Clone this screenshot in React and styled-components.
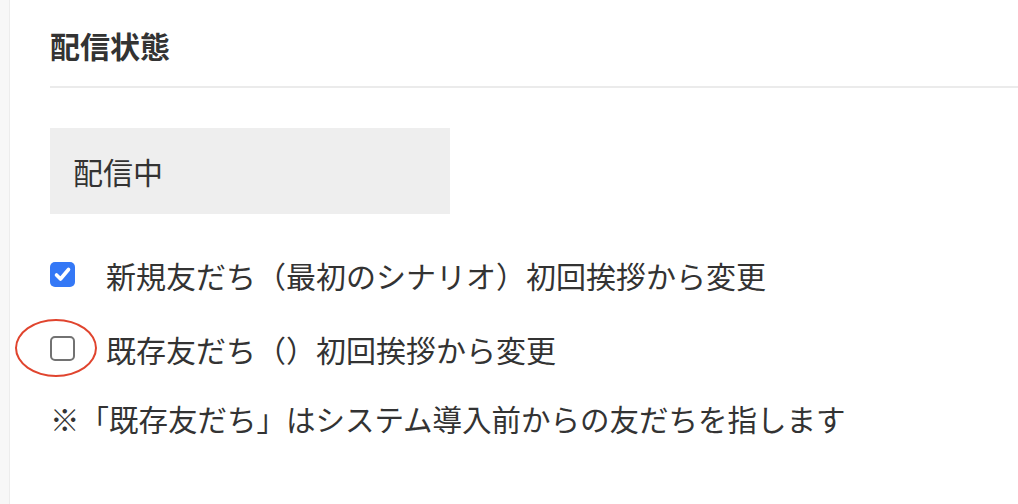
import React from "react";
import styled, { createGlobalStyle } from "styled-components";

const GlobalStyle = createGlobalStyle`
  html, body {
    margin: 0;
    padding: 0;
    background: #ffffff;
  }
  body {
    font-family: "Noto Sans CJK JP", "Noto Sans", sans-serif;
    color: #333333;
  }
`;

const Page = styled.div`
  display: flex;
  min-height: 504px;
  width: 1018px;
  overflow: hidden;
`;

const SideStrip = styled.div`
  width: 9px;
  flex-shrink: 0;
  background: #f7f7f7;
  border-right: 1px solid #ececec;
`;

const Content = styled.div`
  flex: 1;
  display: flex;
  flex-direction: column;
  padding-left: 40px;
`;

const Heading = styled.h2`
  margin: 0;
  padding-top: 30px;
  font-size: 30px;
  line-height: 30px;
  font-weight: 700;
  color: #333333;
`;

const Divider = styled.hr`
  margin: 26px 0 0;
  border: none;
  height: 2px;
  background: #ebebeb;
`;

const StatusBox = styled.div`
  margin-top: 40px;
  width: 400px;
  height: 86px;
  box-sizing: border-box;
  padding-left: 23px;
  display: flex;
  align-items: center;
  background: #eeeeee;
  font-size: 30px;
  color: #333333;
`;

const CheckRow = styled.label`
  position: relative;
  display: flex;
  align-items: center;
  gap: 31px;
  height: 45px;
  margin-top: ${({ gapTop }) => gapTop}px;
  font-size: 30px;
  color: #333333;
`;

const Box = styled.span`
  width: 25px;
  height: 25px;
  box-sizing: border-box;
  border-radius: 5px;
  flex-shrink: 0;
  display: flex;
  align-items: center;
  justify-content: center;
  background: ${({ checked }) => (checked ? "#3478f6" : "#ffffff")};
  border: ${({ checked }) => (checked ? "none" : "2px solid #727272")};
`;

// red ring marking the unchecked box
const Marker = styled.span`
  position: absolute;
  left: -35px;
  top: -7px;
  width: 82px;
  height: 58px;
  box-sizing: border-box;
  border: 2.5px solid #e0442e;
  border-radius: 50%;
  pointer-events: none;
`;

const Note = styled.p`
  margin: 25px 0 0;
  font-size: 29.5px;
  line-height: 45px;
  color: #333333;
`;

const Checkbox = ({ checked }) => (
  <Box checked={checked}>
    {checked && (
      <svg width="25" height="25" viewBox="0 0 25 25">
        <path
          d="M6.5 13 L10.5 17 L18.5 7.5"
          fill="none"
          stroke="#ffffff"
          strokeWidth="3.6"
          strokeLinecap="round"
          strokeLinejoin="round"
        />
      </svg>
    )}
  </Box>
);

export default function App() {
  return (
    <>
      <GlobalStyle />
      <Page>
        <SideStrip />
        <Content>
          <Heading>配信状態</Heading>
          <Divider />
          <StatusBox>配信中</StatusBox>
          <CheckRow gapTop={38}>
            <Checkbox checked />
            <span>新規友だち（最初のシナリオ）初回挨拶から変更</span>
          </CheckRow>
          <CheckRow gapTop={29}>
            <Marker />
            <Checkbox checked={false} />
            <span>既存友だち（）初回挨拶から変更</span>
          </CheckRow>
          <Note>※「既存友だち」はシステム導入前からの友だちを指します</Note>
        </Content>
      </Page>
    </>
  );
}
